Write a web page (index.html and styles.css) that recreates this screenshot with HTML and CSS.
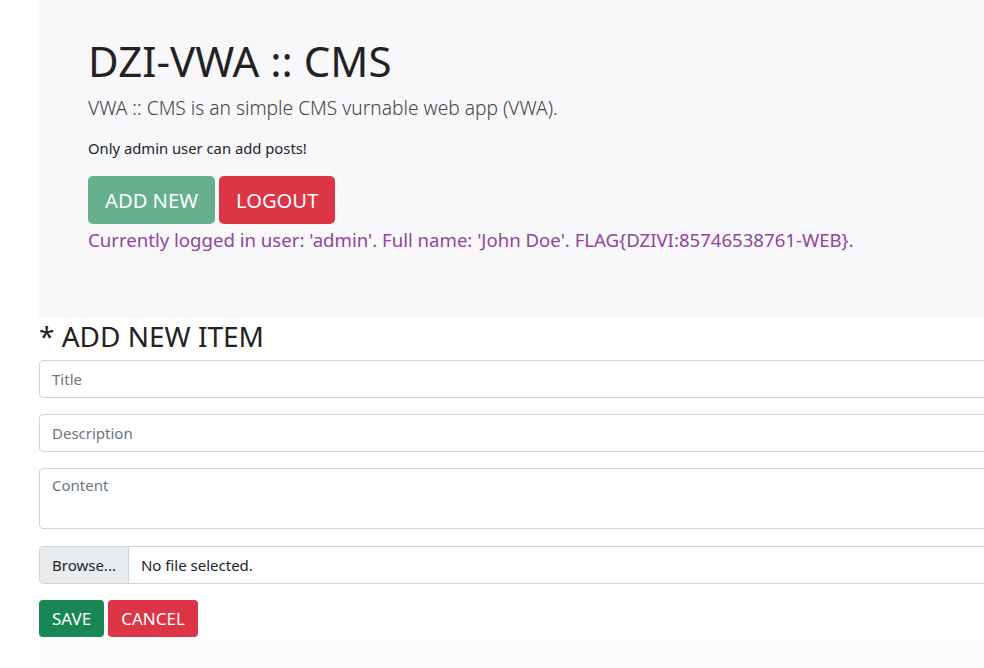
FILE: index.html
```html
<!DOCTYPE html>
<html lang="en">
<head>
<meta charset="utf-8">
<title>DZI-VWA :: CMS</title>
<link rel="stylesheet" href="styles.css">
</head>
<body>
<div class="page">
  <div class="jumbotron">
    <h1 class="display">DZI-VWA :: CMS</h1>
    <p class="lead">VWA :: CMS is an simple CMS vurnable web app (VWA).</p>
    <p class="note">Only admin user can add posts!</p>
    <div class="actions">
      <button class="btn btn-lg btn-add">ADD NEW</button>
      <button class="btn btn-lg btn-danger">LOGOUT</button>
    </div>
    <p class="user">Currently logged in user: 'admin'. Full name: 'John Doe'. FLAG{DZIVI:85746538761-WEB}.</p>
  </div>
  <form class="form">
    <h3 class="form-title">* ADD NEW ITEM</h3>
    <input class="control" type="text" placeholder="Title">
    <input class="control" type="text" placeholder="Description">
    <textarea class="control area" placeholder="Content"></textarea>
    <div class="file">
      <span class="file-btn">Browse...</span>
      <span class="file-name">No file selected.</span>
    </div>
    <div class="form-actions">
      <button type="button" class="btn btn-save">SAVE</button>
      <button type="button" class="btn btn-danger">CANCEL</button>
    </div>
  </form>
  <div class="footer"></div>
</div>
</body>
</html>
```
FILE: styles.css
```css
html, body {
  margin: 0;
  padding: 0;
  background: #fff;
}
body {
  font-family: "Noto Sans", "Open Sans", sans-serif;
  color: #212529;
  font-size: 16px;
  overflow: hidden;
}
.page {
  margin-left: 39px;
  width: 1100px;
}
.jumbotron {
  background: #f8f8fb;
  padding: 33px 48px 0 49px;
  height: 318px;
  box-sizing: border-box;
}
.display {
  margin: 0;
  font-size: 42px;
  font-weight: 400;
  line-height: 56px;
  color: #222;
}
.lead {
  margin: 5px 0 0;
  font-size: 19.2px;
  font-weight: 300;
  line-height: 28px;
  color: #444;
}
.note {
  margin: 14px 0 0;
  font-size: 14.8px;
  line-height: 24px;
}
.actions {
  display: flex;
  gap: 4px;
  margin-top: 16px;
}
.btn {
  border: none;
  font-family: inherit;
  color: #fff;
  border-radius: 4px;
  cursor: pointer;
}
.btn-lg {
  height: 48px;
  padding: 0 17px;
  font-size: 20.2px;
  border-radius: 5px;
}
.btn-add {
  background: #66b08f;
}
.btn-danger {
  background: #dc3545;
}
.user {
  margin: 3px 0 0;
  font-size: 18.6px;
  line-height: 26px;
  color: #93449b;
}
.form {
  display: flex;
  flex-direction: column;
}
.form-title {
  margin: 2px 0 8px;
  font-size: 28px;
  font-weight: 400;
  line-height: 32px;
  color: #222;
}
.control {
  display: block;
  box-sizing: border-box;
  width: 100%;
  height: 38px;
  margin: 0 0 16px;
  padding: 6px 12px;
  border: 1px solid #ced4da;
  border-radius: 4px;
  font-family: inherit;
  font-size: 15px;
  color: #212529;
  background: #fff;
  resize: none;
}
.control::placeholder {
  color: #6c757d;
}
.area {
  height: 61px;
  margin-bottom: 17px;
}
.file {
  display: flex;
  height: 38px;
  box-sizing: border-box;
  border: 1px solid #ced4da;
  border-radius: 4px;
  overflow: hidden;
  font-size: 15px;
  margin-bottom: 16px;
}
.file-btn {
  display: flex;
  align-items: center;
  padding: 0 12px;
  background: #e9ecef;
  border-right: 1px solid #ced4da;
  color: #212529;
}
.file-name {
  display: flex;
  align-items: center;
  padding: 0 12px;
  color: #212529;
}
.form-actions {
  display: flex;
  gap: 4px;
}
.form-actions .btn {
  height: 37px;
  padding: 0 13px;
  font-size: 17px;
}
.btn-save {
  background: #198754;
}
.footer {
  margin-top: 3px;
  height: 40px;
  background: #fcfcfd;
}
```
